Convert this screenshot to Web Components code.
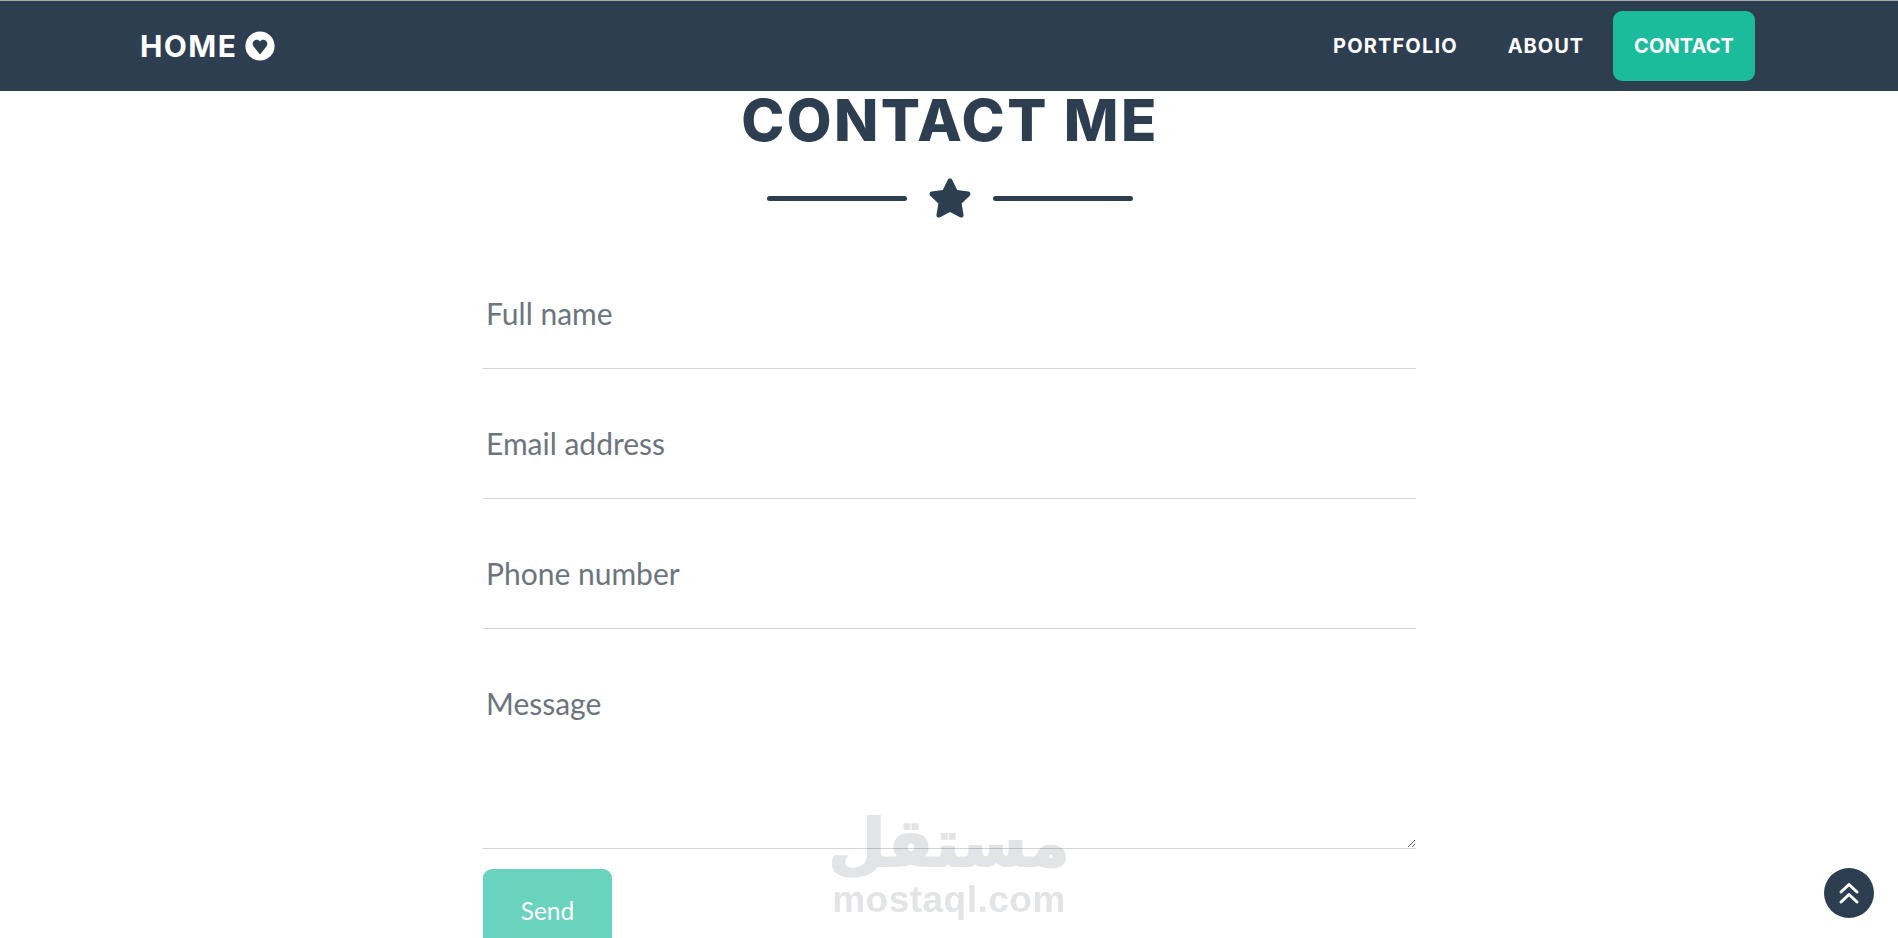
<!DOCTYPE html>
<html lang="en">
<head>
<meta charset="utf-8">
<title>Contact</title>
<style>
  html, body { margin: 0; height: 100%; overflow: hidden; background: #fff; }
  body { font-family: "Lato", sans-serif; }
</style>
</head>
<body>
<site-nav>
  <nav-link style="--ls: 1.150px">PORTFOLIO</nav-link>
  <nav-link style="--ls: 0.950px">ABOUT</nav-link>
  <nav-link style="--ls: 0.100px" active>CONTACT</nav-link>
</site-nav>
<contact-section>
  <form-field>Full name</form-field>
  <form-field>Email address</form-field>
  <form-field>Phone number</form-field>
  <form-field multiline>Message</form-field>
  <send-button>Send</send-button>
</contact-section>
<site-watermark></site-watermark>
<scroll-top></scroll-top>

<script>
class SiteNav extends HTMLElement {
  constructor() {
    super();
    this.attachShadow({ mode: 'open' }).innerHTML = `
      <style>
        :host {
          display: flex;
          align-items: center;
          justify-content: space-between;
          box-sizing: border-box;
          height: 91px;
          padding: 0 143px 0 140px;
          background: #2c3e50;
          border-top: 1px solid #a9a9a9;
          font-family: "Inter", "Liberation Sans", sans-serif;
        }
        .brand {
          display: flex;
          align-items: center;
          gap: 8px;
          color: #fff;
          font-size: 30px;
          font-weight: 700;
          letter-spacing: 1.4px;
        }
        svg { width: 30px; height: 30px; display: block; }
        .links { display: flex; align-items: center; gap: 8px; }
      </style>
      <div class="brand">HOME
        <svg viewBox="0 0 30 30"><circle cx="15" cy="15" r="14.6" fill="#fff"/><path fill="#2c3e50" d="M15 23.4 8.6 15.6C6.9 13.4 7.5 10 10.3 9c1.9-.7 3.700 0 4.700 1.500C16 9 17.800 8.300 19.700 9c2.800 1 3.400 4.400 1.700 6.600z"/></svg>
      </div>
      <div class="links"><slot></slot></div>`;
  }
}

class NavLink extends HTMLElement {
  constructor() {
    super();
    this.attachShadow({ mode: 'open' }).innerHTML = `
      <style>
        :host {
          display: block;
          padding: 0 21px;
          height: 70px;
          line-height: 70px;
          border-radius: 9px;
          color: #fff;
          font-size: 20px;
          font-weight: 700;
          letter-spacing: var(--ls, 0);
        }
        :host([active]) { background: #1abc9c; }
      </style>
      <slot></slot>`;
  }
}

class ContactSection extends HTMLElement {
  constructor() {
    super();
    this.attachShadow({ mode: 'open' }).innerHTML = `
      <style>
        :host { display: block; }
        h2 {
          margin: 0;
          height: 87px;
          padding-left: 2px;
          text-align: center;
          color: #2c3e50;
          font: 800 58px/58px "Inter", "Liberation Sans", sans-serif;
          letter-spacing: 2.4px;
          text-transform: uppercase;
        }
        .divider {
          display: flex;
          align-items: center;
          justify-content: center;
          gap: 21px;
          height: 40px;
          padding-left: 2px;
        }
        .bar { width: 140px; height: 5px; border-radius: 3px; background: #2c3e50; }
        svg { width: 44px; height: 40px; display: block; }
        .form { width: 933px; margin: 21px auto 0 483px; }
      </style>
      <h2>Contact Me</h2>
      <div class="divider">
        <span class="bar"></span>
        <svg viewBox="0 0 576 512"><path fill="#2c3e50" d="M259.300 17.800 194 150.200 47.900 171.500c-26.200 3.800-36.700 36.100-17.700 54.600l105.700 103-25 145.500c-4.500 26.300 23.200 46 46.400 33.700L288 439.600l130.700 68.700c23.200 12.200 50.900-7.400 46.400-33.700l-25-145.500 105.700-103c19-18.500 8.500-50.800-17.700-54.600L382 150.200 316.700 17.800c-11.700-23.600-45.600-23.900-57.400 0z"/></svg>
        <span class="bar"></span>
      </div>
      <div class="form"><slot></slot></div>`;
  }
}

class FormField extends HTMLElement {
  constructor() {
    super();
    const multi = this.hasAttribute('multiline');
    this.attachShadow({ mode: 'open' }).innerHTML = `
      <style>
        :host {
          display: grid;
          height: ${multi ? 220 : 130}px;
          box-sizing: border-box;
          border-bottom: 1px solid #ced4da;
          font: 400 30px/1.2 "Lato", sans-serif;
        }
        :host > * { grid-area: 1 / 1; }
        label { color: #6c757d; padding: 56px 0 0 3px; line-height: 36px; }
        input, textarea {
          display: block;
          box-sizing: border-box;
          width: 100%;
          height: 100%;
          margin: 0;
          border: 0;
          outline: 0;
          padding: 0;
          background: transparent;
          font: inherit;
        }
      </style>
      <label><slot></slot></label>
      ${multi ? '<textarea></textarea>' : '<input type="text">'}`;
  }
}

class SendButton extends HTMLElement {
  constructor() {
    super();
    this.attachShadow({ mode: 'open' }).innerHTML = `
      <style>
        :host { display: block; margin-top: 20px; }
        button {
          display: block;
          width: 129px;
          height: 84px;
          border: 0;
          border-radius: 9px;
          padding: 0;
          background: #1abc9c;
          opacity: .65;
          color: #fff;
          font: 400 24.500px/1.5 "Lato", sans-serif;
        }
      </style>
      <button type="button"><slot></slot></button>`;
  }
}

class SiteWatermark extends HTMLElement {
  constructor() {
    super();
    this.attachShadow({ mode: 'open' }).innerHTML = `
      <style>
        :host {
          position: fixed;
          left: 835px;
          top: 806px;
          width: 228px;
          display: flex;
          flex-direction: column;
          align-items: center;
          color: #e3e4e5;
          pointer-events: none;
          mix-blend-mode: multiply;
        }
        .ar {
          font: 700 66px/75px "DejaVu Sans", sans-serif;
          -webkit-text-stroke: 2px #e3e4e5;
        }
        .en { font: 700 37px/38px "Liberation Sans", sans-serif; letter-spacing: 0.5px; }
      </style>
      <div class="ar" lang="ar" dir="rtl">مستقل</div>
      <div class="en">mostaql.com</div>`;
  }
}

class ScrollTop extends HTMLElement {
  constructor() {
    super();
    this.attachShadow({ mode: 'open' }).innerHTML = `
      <style>
        :host {
          position: fixed;
          right: 24px;
          bottom: 20px;
          width: 50px;
          height: 50px;
          border-radius: 50%;
          background: #2c3e50;
          display: flex;
          align-items: center;
          justify-content: center;
        }
        svg { width: 22px; height: 24px; display: block; }
      </style>
      <svg viewBox="0 0 22 24" fill="none" stroke="#fff" stroke-width="3" stroke-linecap="round" stroke-linejoin="round">
        <path d="M3 11 11 3.500 19 11"/><path d="M3 21 11 13.500 19 21"/>
      </svg>`;
  }
}

customElements.define('site-nav', SiteNav);
customElements.define('nav-link', NavLink);
customElements.define('contact-section', ContactSection);
customElements.define('form-field', FormField);
customElements.define('send-button', SendButton);
customElements.define('site-watermark', SiteWatermark);
customElements.define('scroll-top', ScrollTop);
</script>
</body>
</html>
